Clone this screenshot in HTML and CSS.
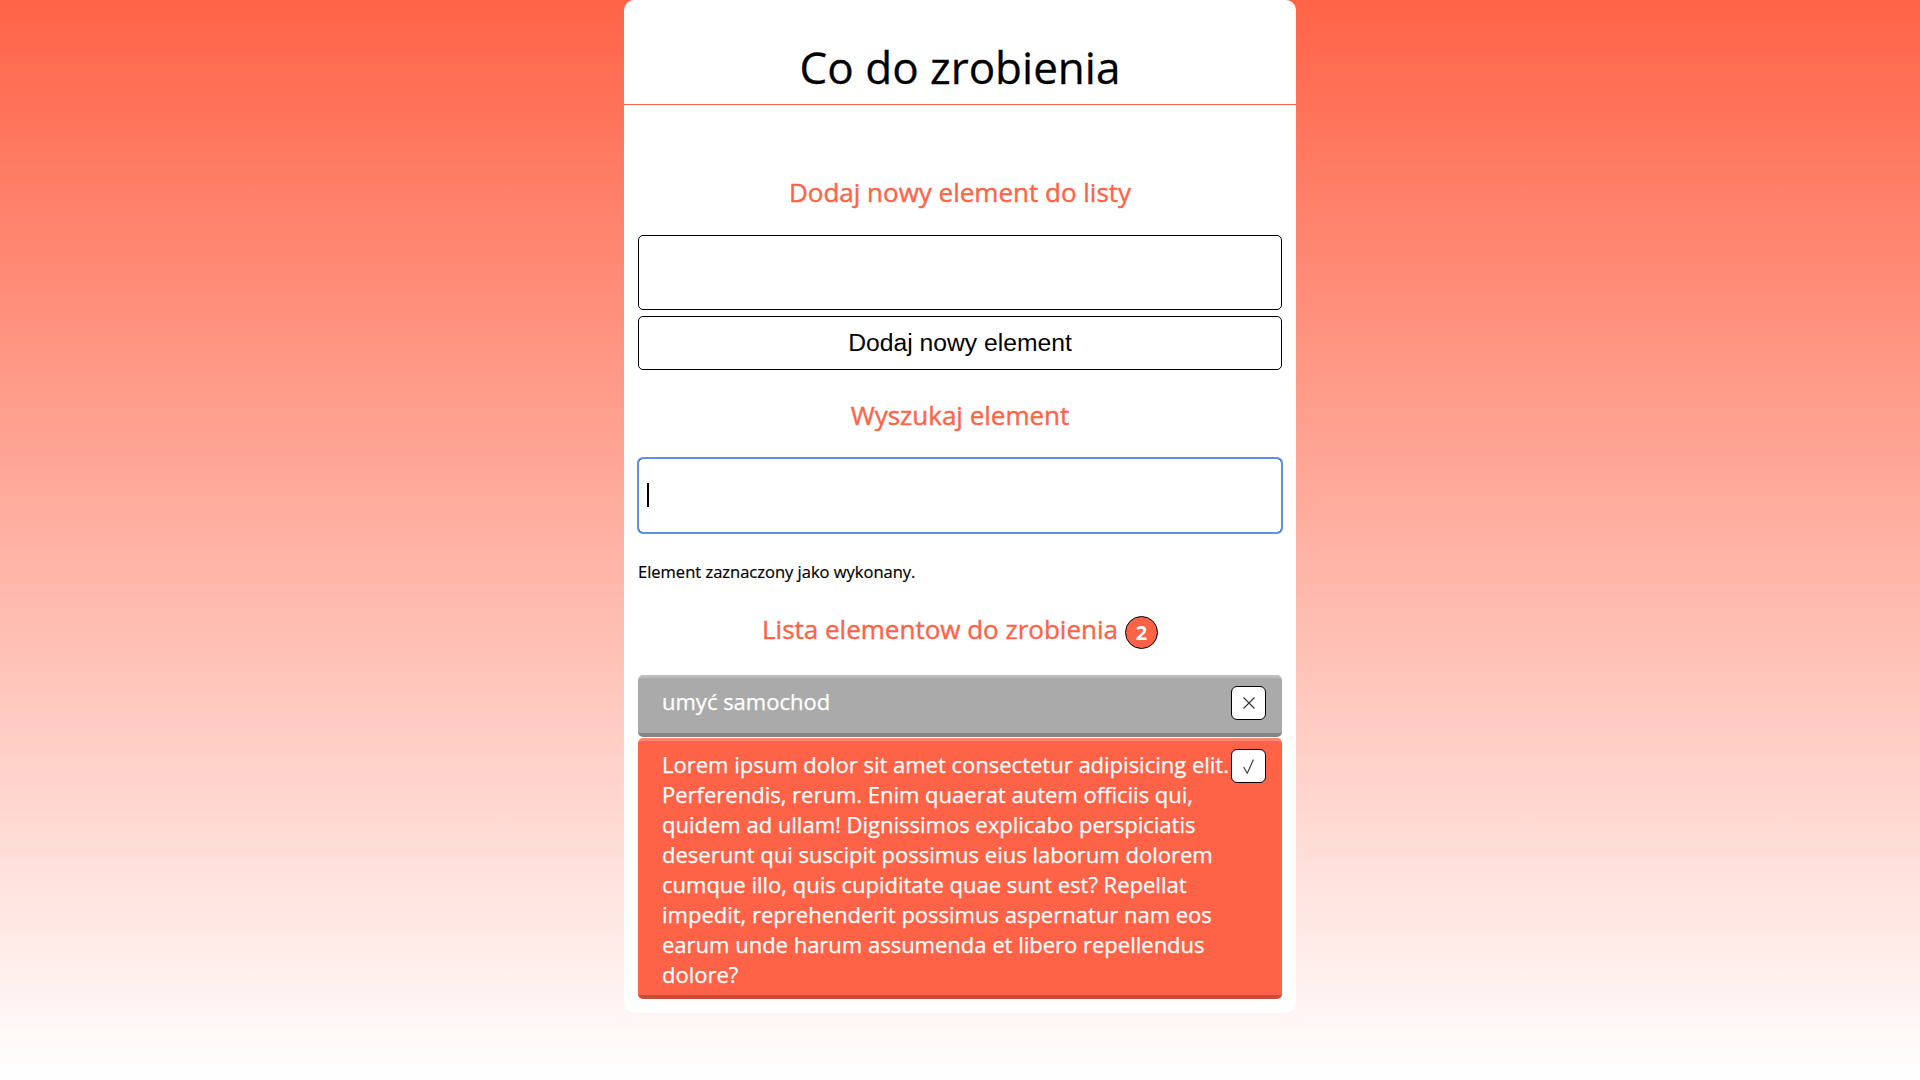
FILE: index.html
```html
<!DOCTYPE html>
<html lang="pl">
<head>
<meta charset="utf-8">
<title>Co do zrobienia</title>
<link rel="stylesheet" href="styles.css">
</head>
<body>
<div class="card">
  <header class="card-header">
    <h1 class="title">Co do zrobienia</h1>
  </header>
  <main class="card-body">
    <h2 class="section-title section-title--first">Dodaj nowy element do listy</h2>
    <form class="add-form">
      <input class="text-input" type="text">
      <button class="add-btn" type="button">Dodaj nowy element</button>
    </form>
    <h2 class="section-title">Wyszukaj element</h2>
    <div class="search-wrap">
      <input class="text-input text-input--focused" type="text">
      <span class="caret"></span>
    </div>
    <p class="status">Element zaznaczony jako wykonany.</p>
    <h2 class="section-title section-title--list">Lista elementow do zrobienia <span class="badge">2</span></h2>
    <ul class="todo-list">
      <li class="todo todo--done">
        <span class="todo-text">umyć samochod</span>
        <button class="todo-btn" type="button" aria-label="Usuń">
          <svg width="12" height="12" viewBox="0 0 12 12"><path d="M0.5 0.5 L11.5 11.5 M11.5 0.5 L0.5 11.5" stroke="#333" stroke-width="1.1" fill="none"/></svg>
        </button>
      </li>
      <li class="todo todo--active">
        <span class="todo-text">Lorem ipsum dolor sit amet consectetur adipisicing elit. Perferendis, rerum. Enim quaerat autem officiis qui, quidem ad ullam! Dignissimos explicabo perspiciatis deserunt qui suscipit possimus eius laborum dolorem cumque illo, quis cupiditate quae sunt est? Repellat impedit, reprehenderit possimus aspernatur nam eos earum unde harum assumenda et libero repellendus dolore?</span>
        <button class="todo-btn" type="button" aria-label="Wykonane">
          <svg width="11" height="15" viewBox="0 0 11 15"><path d="M0.6 8 L4.3 14.2 L10.4 0.6" stroke="#333" stroke-width="1.1" fill="none" stroke-linejoin="round"/></svg>
        </button>
      </li>
    </ul>
  </main>
</div>
</body>
</html>
```
FILE: styles.css
```css
html {
  min-height: 100%;
  background: linear-gradient(to bottom, #ff6347, #ffffff);
}

body {
  margin: 0;
  font-family: "Open Sans", "Liberation Sans", sans-serif;
  color: #000;
}

.card {
  width: 35%;
  margin: 0 auto;
  background: #fff;
  border-radius: 10px;
  padding-bottom: 14px;
}

.card-header {
  padding: 37px 0 7px;
  border-bottom: 1px solid #ff6347;
}

.title {
  margin: 0;
  font-size: 44px;
  line-height: 60px;
  font-weight: 400;
  text-align: center;
  -webkit-text-stroke: 0.3px #000;
}

.card-body {
  padding: 0 14px;
}

.section-title {
  margin: 27px 0 25px;
  font-size: 26px;
  line-height: 36px;
  font-weight: 500;
  color: #ff6347;
  text-align: center;
  -webkit-text-stroke: 0.4px #ff6347;
}

.section-title--first {
  margin-top: 69px;
}

.section-title--list {
  display: flex;
  justify-content: center;
  align-items: flex-start;
  gap: 7px;
  height: 36px;
  margin-top: 28px;
  margin-bottom: 28px;
}

.badge {
  display: inline-flex;
  align-items: center;
  justify-content: center;
  box-sizing: border-box;
  width: 33px;
  height: 33px;
  margin-top: 5px;
  border: 1px solid #000;
  border-radius: 50%;
  background: #ff6347;
  color: #fff;
  font-size: 20px;
  font-weight: 700;
  line-height: 1;
  -webkit-text-stroke: 0;
}

.add-form {
  display: flex;
  flex-direction: column;
  gap: 6px;
  margin: 0;
}

.text-input {
  display: block;
  box-sizing: border-box;
  width: 100%;
  height: 75px;
  margin: 0;
  padding: 0 8px;
  border: 1px solid #000;
  border-radius: 5px;
  background: #fff;
  font-family: "Open Sans", sans-serif;
  font-size: 24px;
}

.text-input--focused {
  outline: 2px solid #5b91e6;
  outline-offset: -1px;
}

.add-btn {
  display: block;
  box-sizing: border-box;
  width: 100%;
  height: 54px;
  margin: 0;
  border: 1px solid #000;
  border-radius: 5px;
  background: #fff;
  color: #000;
  font-family: "Liberation Sans", Arial, sans-serif;
  font-size: 24.7px;
}

.search-wrap {
  position: relative;
}

.caret {
  position: absolute;
  left: 9px;
  top: 25px;
  width: 2px;
  height: 24px;
  background: #000;
}

.status {
  margin: 28px 0 0;
  font-size: 16.5px;
  line-height: 22px;
  -webkit-text-stroke: 0.2px #000;
}

.todo-list {
  list-style: none;
  margin: 0;
  padding: 0;
  display: flex;
  flex-direction: column;
  gap: 1px;
}

.todo {
  display: flex;
  align-items: flex-start;
  padding: 8px 16px 6px 24px;
  border-radius: 5px;
  border-top: 3px solid rgba(255, 255, 255, 0.22);
  border-bottom: 4px solid rgba(0, 0, 0, 0.22);
  color: #fff;
  font-size: 22px;
  line-height: 30px;
}

.todo--done {
  background: #aaaaaa;
}

.todo--active {
  background: #ff6347;
}

.todo-text {
  flex: 1;
  min-width: 0;
  -webkit-text-stroke: 0.25px #fff;
}

.todo-btn {
  flex: none;
  display: flex;
  align-items: center;
  justify-content: center;
  box-sizing: border-box;
  width: 35px;
  height: 34px;
  margin: 0 0 7px;
  padding: 0;
  border: 1px solid #000;
  border-radius: 6px;
  background: #fff;
}
```
